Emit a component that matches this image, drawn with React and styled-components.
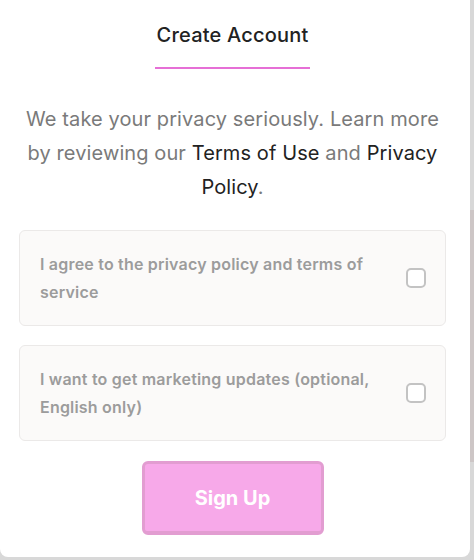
import React, { useState } from 'react';
import styled, { createGlobalStyle } from 'styled-components';

const GlobalStyle = createGlobalStyle`
  html, body {
    margin: 0;
    padding: 0;
    height: 100%;
  }
  body {
    font-family: Inter, "Noto Sans", sans-serif;
    background: linear-gradient(
      to bottom,
      #d8d8d8 0,
      #d8d8d8 210px,
      #cdc6c6 210px,
      #cdc6c6 462px,
      #d8d8d8 462px
    );
    overflow: hidden;
  }
`;

const Modal = styled.div`
  width: 470px;
  height: 557px;
  background: #ffffff;
  border-radius: 0 0 8px 8px;
  box-sizing: border-box;
  padding: 20px 24px 0 19px;
  display: flex;
  flex-direction: column;
  align-items: center;
`;

const Title = styled.h2`
  margin: 0;
  font-size: 20px;
  font-weight: 500;
  color: #222222;
  line-height: 30px;
  padding: 0 2px 17px;
  border-bottom: 2px solid #e66fd6;
  letter-spacing: 0.2px;
`;

const Intro = styled.p`
  margin: 33px 0 26px 0;
  text-align: center;
  font-size: 20px;
  line-height: 34px;
  color: #7a7a7a;
  letter-spacing: 0.1px;
`;

const Link = styled.span`
  color: #222222;
`;

const Option = styled.label`
  width: 100%;
  box-sizing: border-box;
  min-height: 96px;
  display: flex;
  align-items: center;
  justify-content: space-between;
  gap: 24px;
  padding: 0 19px 0 20px;
  background: #fbfaf9;
  border: 1px solid #ebe9e8;
  border-radius: 6px;
  margin-bottom: 19px;
  cursor: pointer;
`;

const OptionText = styled.span`
  font-size: 16px;
  line-height: 28px;
  font-weight: 600;
  color: #9c9c9c;
  letter-spacing: 0.2px;
`;

const Box = styled.span`
  flex: none;
  width: 16px;
  height: 16px;
  border: 2px solid #c3c3c3;
  border-radius: 5px;
  background: ${(p) => (p.checked ? '#e66fd6' : '#ffffff')};
`;

const SignUp = styled.button`
  margin-top: 1px;
  width: 182px;
  height: 74px;
  background: #f7a9e9;
  border: 3px solid #e29dd1;
  border-bottom-width: 4px;
  border-radius: 6px;
  color: #ffffff;
  font-family: Inter, "Noto Sans", sans-serif;
  font-size: 20px;
  font-weight: 700;
  cursor: pointer;
`;

function Checkbox({ label }) {
  const [checked, setChecked] = useState(false);
  return (
    <Option onClick={() => setChecked(!checked)}>
      <OptionText>{label}</OptionText>
      <Box checked={checked} />
    </Option>
  );
}

function App() {
  return (
    <>
      <GlobalStyle />
      <Modal>
        <Title>Create Account</Title>
        <Intro>
          We take your privacy seriously. Learn more by reviewing our{' '}
          <Link>Terms of Use</Link> and <Link>Privacy Policy</Link>.
        </Intro>
        <Checkbox label="I agree to the privacy policy and terms of service" />
        <Checkbox label="I want to get marketing updates (optional, English only)" />
        <SignUp>Sign Up</SignUp>
      </Modal>
    </>
  );
}

export default App;
